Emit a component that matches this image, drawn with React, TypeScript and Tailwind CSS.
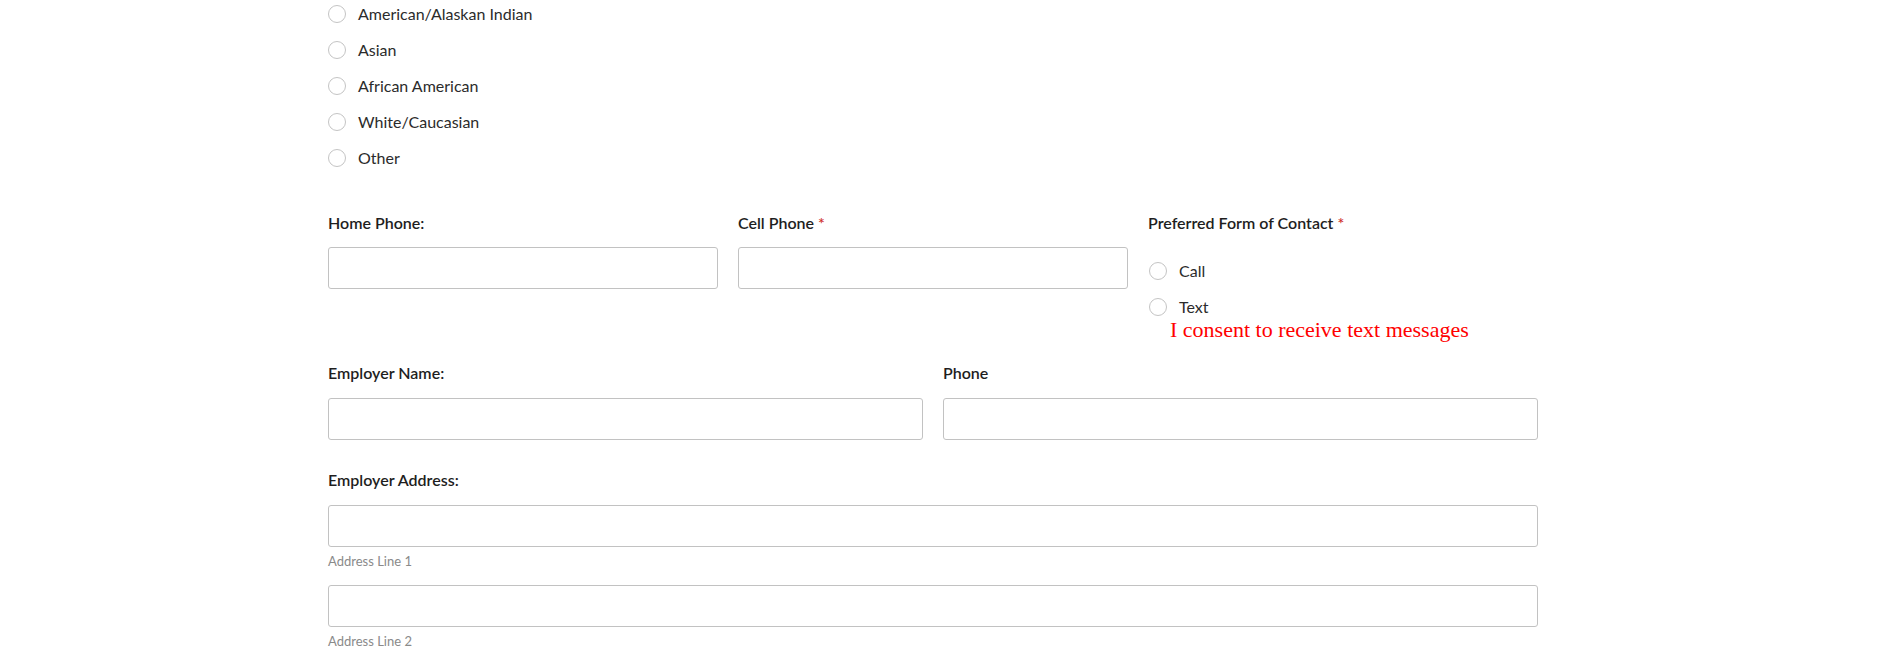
import React from 'react';

const races = ['American/Alaskan Indian', 'Asian', 'African American', 'White/Caucasian', 'Other'];

function Radio({ label, name }: { label: string; name: string }) {
  return (
    <label className="flex items-center h-[26px] cursor-pointer">
      <input type="radio" name={name} className="peer sr-only" />
      <span className="w-[18px] h-[18px] rounded-full border border-[#c4c4c4] bg-white shrink-0" />
      <span className="ml-[12px] text-[16px] text-[#2b2b2b]">{label}</span>
    </label>
  );
}

function FieldLabel({ children, required }: { children: React.ReactNode; required?: boolean }) {
  return (
    <div className="h-[20px] leading-[20px] text-[16px] font-semibold text-[#1e1e1e]">
      {children}
      {required && <span className="text-[#d0312d] ml-[4px]">*</span>}
    </div>
  );
}

function TextInput() {
  return <input type="text" className="block w-full h-[42px] border border-[#c2c2c2] rounded-[3px] bg-white px-3 outline-none" />;
}

export default function App() {
  return (
    <div className="min-h-screen bg-white" style={{ fontFamily: 'Lato, "Open Sans", sans-serif' }}>
      <div className="ml-[328px] w-[1210px]">
        {/* Race */}
        <div className="flex flex-col gap-[10px] pt-[1px]">
          {races.map((r) => (
            <Radio key={r} label={r} name="race" />
          ))}
        </div>

        {/* Phones + contact preference */}
        <div className="grid grid-cols-3 gap-x-[20px] mt-[42px]">
          <div>
            <FieldLabel>Home Phone:</FieldLabel>
            <div className="mt-[14px]">
              <TextInput />
            </div>
          </div>
          <div>
            <FieldLabel required>Cell Phone</FieldLabel>
            <div className="mt-[14px]">
              <TextInput />
            </div>
          </div>
          <div>
            <FieldLabel required>Preferred Form of Contact</FieldLabel>
            <div className="flex flex-col gap-[10px] mt-[25px] pl-[1px]">
              <Radio label="Call" name="contact" />
              <Radio label="Text" name="contact" />
            </div>
            <div
              className="ml-[22px] mt-[-3px] text-[22px] leading-[26px] text-[#ff0000]"
              style={{ fontFamily: '"Liberation Serif", "Times New Roman", serif' }}
            >
              I consent to receive text messages
            </div>
          </div>
        </div>

        {/* Employer */}
        <div className="grid grid-cols-2 gap-x-[20px] mt-[20px]">
          <div>
            <FieldLabel>Employer Name:</FieldLabel>
            <div className="mt-[15px]">
              <TextInput />
            </div>
          </div>
          <div>
            <FieldLabel>Phone</FieldLabel>
            <div className="mt-[15px]">
              <TextInput />
            </div>
          </div>
        </div>

        <div className="mt-[30px]">
          <FieldLabel>Employer Address:</FieldLabel>
          <div className="mt-[15px]">
            <TextInput />
          </div>
          <div className="mt-[5px] text-[13px] leading-[18px] text-[#8a8a8a]">Address Line 1</div>
          <div className="mt-[15px]">
            <TextInput />
          </div>
          <div className="mt-[5px] text-[13px] leading-[18px] text-[#8a8a8a]">Address Line 2</div>
        </div>
      </div>
    </div>
  );
}
